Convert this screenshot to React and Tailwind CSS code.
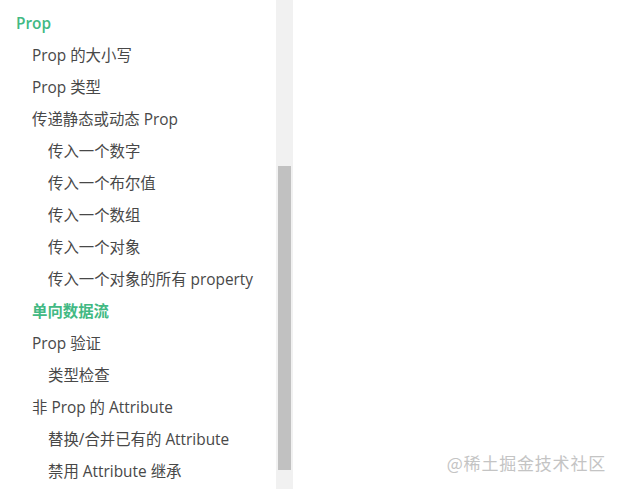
import React from "react";

const items = [
  { text: "Prop", level: 1, active: true },
  { text: "Prop 的大小写", level: 2 },
  { text: "Prop 类型", level: 2 },
  { text: "传递静态或动态 Prop", level: 2 },
  { text: "传入一个数字", level: 3 },
  { text: "传入一个布尔值", level: 3 },
  { text: "传入一个数组", level: 3 },
  { text: "传入一个对象", level: 3 },
  { text: "传入一个对象的所有 property", level: 3 },
  { text: "单向数据流", level: 2, active: true },
  { text: "Prop 验证", level: 2 },
  { text: "类型检查", level: 3 },
  { text: "非 Prop 的 Attribute", level: 2 },
  { text: "替换/合并已有的 Attribute", level: 3 },
  { text: "禁用 Attribute 继承", level: 3 },
];

const indent = { 1: "pl-[16px]", 2: "pl-[32px]", 3: "pl-[48px]" };

export default function App() {
  return (
    <div
      className="relative flex w-[621px] h-[489px] overflow-hidden bg-white"
      style={{ fontFamily: '"Open Sans", "Noto Sans CJK SC", sans-serif' }}
    >
      {/* Sidebar */}
      <div className="w-[276px] pt-[8px] flex flex-col">
        {items.map((item, i) => (
          <div
            key={i}
            className={`h-[32px] shrink-0 flex items-center text-[15.4px] whitespace-nowrap ${indent[item.level]} ${
              item.active ? "text-[#42b983] font-semibold" : "text-[#484848]"
            }`}
          >
            {item.text}
          </div>
        ))}
      </div>

      {/* Scrollbar */}
      <div className="w-[17px] h-full bg-[#f1f1f1] flex flex-col items-center">
        <div className="h-[166px] shrink-0" />
        <div className="w-[13px] h-[304px] bg-[#c1c1c1]" />
      </div>

      <div className="flex-1" />

      {/* Watermark */}
      <div
        className="absolute right-[15px] bottom-[14px] text-[17px] text-[#c4c4c4] tracking-[0.8px]"
        style={{ fontFamily: '"Noto Sans CJK SC", sans-serif' }}
      >
        @稀土掘金技术社区
      </div>
    </div>
  );
}
